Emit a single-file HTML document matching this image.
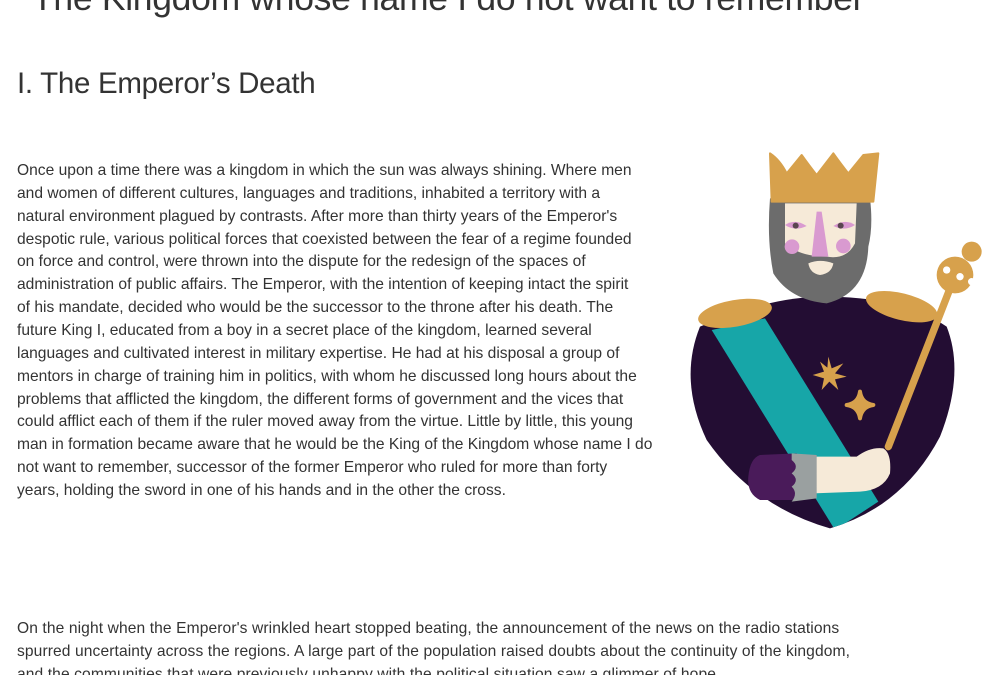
<!DOCTYPE html>
<html><head><meta charset="utf-8"><style>
html,body{margin:0;padding:0;background:#fff;width:990px;height:675px;overflow:hidden;position:relative;font-family:"Liberation Sans",sans-serif;color:#333}
.t{position:absolute;left:32px;top:-22px;font-size:35.5px;white-space:nowrap;color:#333;letter-spacing:-0.3px}
.h{position:absolute;left:17px;top:67px;font-size:29.5px;white-space:nowrap;color:#333;letter-spacing:-0.3px}
.p{position:absolute;left:17px;font-size:15.6px;line-height:22.86px;white-space:nowrap}
svg{position:absolute;left:670px;top:140px}
</style></head><body>
<div class="t">The Kingdom whose name I do not want to remember</div>
<div class="h">I. The Emperor’s Death</div>
<div class="p" style="top:160px">Once upon a time there was a kingdom in which the sun was always shining. Where men<br>and women of different cultures, languages and traditions, inhabited a territory with a<br>natural environment plagued by contrasts. After more than thirty years of the Emperor's<br>despotic rule, various political forces that coexisted between the fear of a regime founded<br>on force and control, were thrown into the dispute for the redesign of the spaces of<br>administration of public affairs. The Emperor, with the intention of keeping intact the spirit<br>of his mandate, decided who would be the successor to the throne after his death. The<br>future King I, educated from a boy in a secret place of the kingdom, learned several<br>languages and cultivated interest in military expertise. He had at his disposal a group of<br>mentors in charge of training him in politics, with whom he discussed long hours about the<br>problems that afflicted the kingdom, the different forms of government and the vices that<br>could afflict each of them if the ruler moved away from the virtue. Little by little, this young<br>man in formation became aware that he would be the King of the Kingdom whose name I do<br>not want to remember, successor of the former Emperor who ruled for more than forty<br>years, holding the sword in one of his hands and in the other the cross.</div>
<div class="p" style="top:618px;letter-spacing:0.1px">On the night when the Emperor's wrinkled heart stopped beating, the announcement of the news on the radio stations<br>spurred uncertainty across the regions. A large part of the population raised doubts about the continuity of the kingdom,<br>and the communities that were previously unhappy with the political situation saw a glimmer of hope.</div>
<svg width="320" height="400" viewBox="0 0 960 1200">
<defs><clipPath id="b"><path d="M90 560 Q300 470 460 470 Q700 470 830 560 Q885 700 810 890 Q700 1100 480 1165 Q250 1100 110 900 Q25 720 90 560Z"/></clipPath></defs>
<path d="M90 560 Q300 470 460 470 Q700 470 830 560 Q885 700 810 890 Q700 1100 480 1165 Q250 1100 110 900 Q25 720 90 560Z" fill="#230d33"/>
<polygon clip-path="url(#b)" points="125,570 285,535 625,1085 495,1170" fill="#17a6a8"/>
<ellipse cx="195" cy="520" rx="112" ry="40" transform="rotate(-10 195 520)" fill="#d7a14c"/>
<ellipse cx="695" cy="500" rx="110" ry="40" transform="rotate(14 695 500)" fill="#d7a14c"/>
<path d="M300 175 L600 175 Q610 260 595 320 Q590 460 470 490 Q360 480 310 400 Q290 300 300 175Z" fill="#6c6c6c"/>
<path d="M345 190 L560 190 L555 310 Q530 360 470 350 Q390 350 345 310Z" fill="#f6ead8"/>
<path d="M415 370 Q450 355 490 370 Q485 400 450 405 Q420 400 415 370Z" fill="#f6ead8"/>
<polygon points="440,215 455,215 475,350 425,350" fill="#d99ad0"/>
<path d="M345 255 Q375 235 410 258 Q375 275 345 255Z" fill="#d99ad0"/>
<path d="M490 258 Q525 235 555 255 Q525 275 490 258Z" fill="#d99ad0"/>
<circle cx="377" cy="257" r="9" fill="#5a4550"/><circle cx="512" cy="257" r="9" fill="#5a4550"/>
<circle cx="366" cy="320" r="22" fill="#d99ad0"/><circle cx="520" cy="318" r="22" fill="#d99ad0"/>
<path d="M305 185 L300 40 Q330 60 350 100 L395 45 Q420 80 440 105 L490 40 Q515 75 535 100 L580 45 L625 40 L610 185Z" fill="#d7a14c" stroke="#d7a14c" stroke-width="6" stroke-linejoin="round"/>
<line x1="655" y1="920" x2="850" y2="420" stroke="#d7a14c" stroke-width="22" stroke-linecap="round"/>
<circle cx="855" cy="405" r="55" fill="#d7a14c"/><circle cx="905" cy="335" r="30" fill="#d7a14c"/>
<circle cx="830" cy="390" r="11" fill="#fff"/><circle cx="870" cy="410" r="11" fill="#fff"/><circle cx="905" cy="425" r="11" fill="#fff"/>
<polygon points="475,650 485,685 520,670 495,700 530,710 495,718 505,750 478,725 455,750 462,715 428,705 462,695 450,665 472,683" fill="#d7a14c"/>
<path d="M570 755 Q575 790 610 795 Q575 800 570 835 Q565 800 530 795 Q565 790 570 755Z" fill="#d7a14c" stroke="#d7a14c" stroke-width="12" stroke-linejoin="round"/>
<path d="M430 950 L560 950 Q600 920 640 925 Q665 940 660 1000 Q640 1050 570 1055 L430 1060Z" fill="#f6ead8"/>
<path d="M270 945 L380 940 L380 1080 L270 1080 Q230 1060 235 1010 Q240 955 270 945Z" fill="#4a1b5a"/>
<path d="M365 940 L440 945 L440 1075 L365 1085 Q385 1060 365 1040 Q390 1020 365 1000 Q390 980 365 960Z" fill="#9aa0a0"/>
</svg>
</body></html>
